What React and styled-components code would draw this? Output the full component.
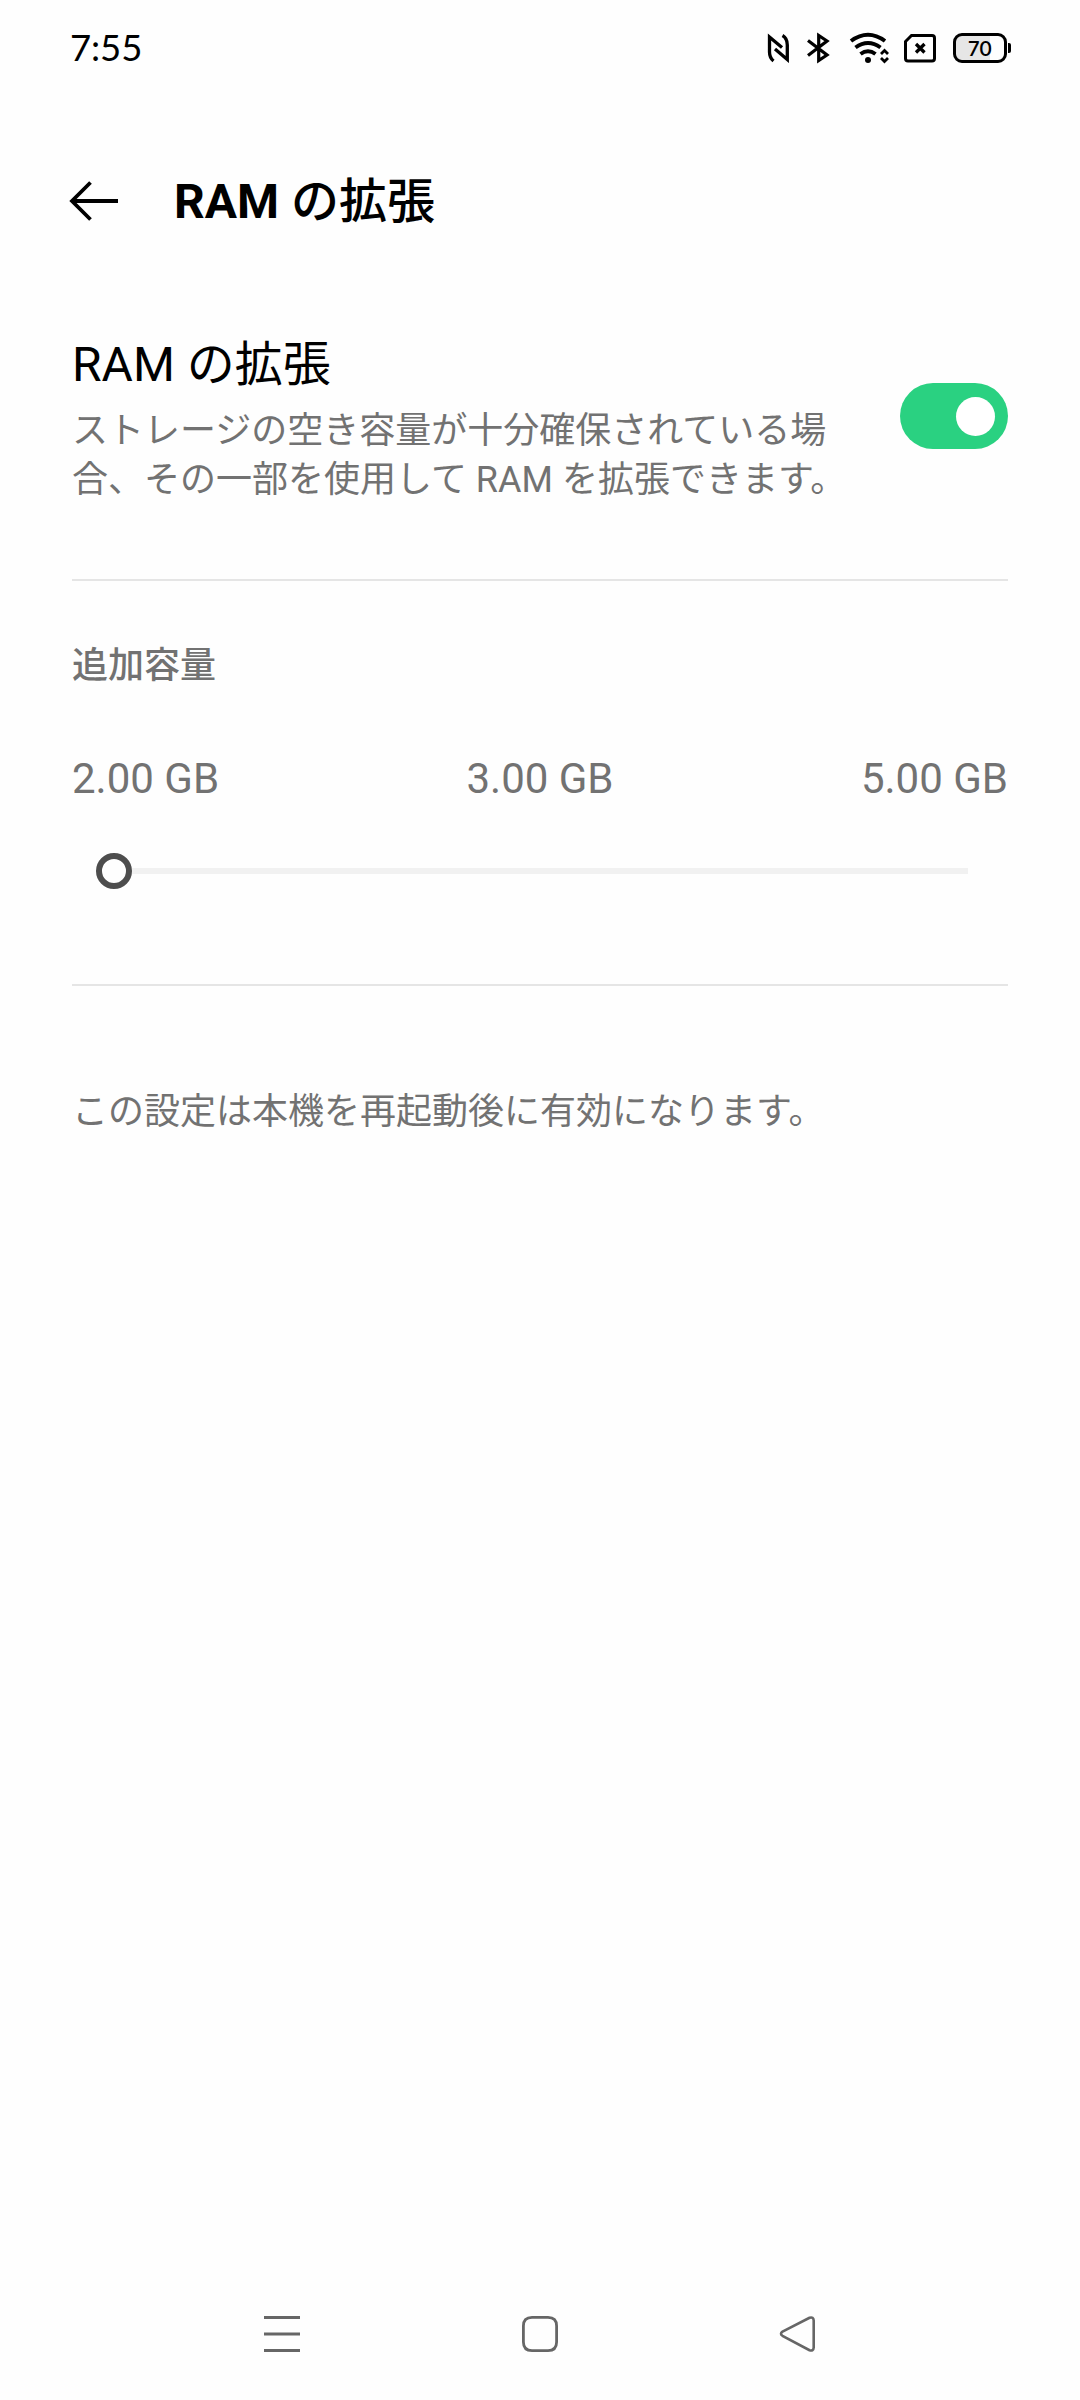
import React from 'react';
import styled, { createGlobalStyle } from 'styled-components';

const GlobalStyle = createGlobalStyle`
  * { box-sizing: border-box; }
  html, body { margin: 0; padding: 0; background: #fefefe; }
  h1, h2, h3, p { margin: 0; font-weight: 400; }
  button { border: 0; padding: 0; background: none; display: block; }
  svg { display: block; }
`;

const Screen = styled.div`
  width: 1080px;
  height: 2400px;
  display: flex;
  flex-direction: column;
  background: #fefefe;
  color: #000;
  font-family: Roboto, "Noto Sans CJK JP", sans-serif;
  overflow: hidden;
`;

const StatusBar = styled.header`
  height: 96px;
  padding: 0 69px 0 70px;
  display: flex;
  justify-content: space-between;
  align-items: center;
`;

const Clock = styled.span`
  padding-bottom: 2px;
  font: 400 36.5px/44px Lato, sans-serif;
  letter-spacing: -0.1px;
`;

const StatusIcons = styled.div`
  display: flex;
  align-items: center;
`;

const Spacer = styled.span`
  width: ${(p) => p.$w}px;
`;

const Battery = styled.div`
  display: flex;
  align-items: center;
  gap: 1px;
  margin-left: 17px;
`;

const BatteryBody = styled.div`
  width: 54px;
  height: 30px;
  border: 3px solid #000;
  border-radius: 9px;
  background: linear-gradient(to right, #e6e6e6 70%, #fefefe 70%);
  font: 500 20.5px/25px Inter, sans-serif;
  letter-spacing: -0.2px;
  text-align: center;
`;

const BatteryTip = styled.div`
  width: 3px;
  height: 10px;
  border-radius: 0 2px 2px 0;
  background: #000;
`;

const TitleBar = styled.div`
  height: 210px;
  padding: 0 68px;
  display: flex;
  align-items: center;
  gap: 54px;
`;

const Title = styled.h1`
  padding-top: 2px;
  font-size: 48px;
  line-height: 64px;
  font-weight: 700;

  span { font-weight: 500; }
`;

const Content = styled.main`
  flex: 1;
  padding: 24px 72px 0;
`;

const SettingRow = styled.section`
  height: 249px;
  display: flex;
  justify-content: space-between;
`;

const SettingText = styled.div`
  width: 780px;
  padding-top: 1px;
`;

const SettingTitle = styled.h2`
  font-size: 48px;
  line-height: 68px;
`;

const Description = styled.p`
  margin-top: 8px;
  font-size: 36px;
  line-height: 49px;
  color: #727272;
`;

const Switch = styled.button`
  width: 108px;
  height: 66px;
  margin-top: 53px;
  padding-right: 13px;
  display: flex;
  align-items: center;
  justify-content: ${(p) => (p.$on ? 'flex-end' : 'flex-start')};
  border-radius: 33px;
  background: ${(p) => (p.$on ? '#2ad181' : '#d9d9d9')};
`;

const Knob = styled.span`
  width: 39px;
  height: 39px;
  border-radius: 50%;
  background: #fff;
`;

const Divider = styled.hr`
  height: 2px;
  margin: 0;
  border: 0;
  background: #e5e5e5;
`;

const Capacity = styled.section`
  height: 403px;
  padding-top: 59px;
`;

const SectionTitle = styled.h3`
  font-size: 36px;
  line-height: 52px;
  font-weight: 500;
  color: #727272;
`;

const Marks = styled.div`
  margin-top: 60px;
  display: flex;
  justify-content: space-between;
  font-size: 42px;
  line-height: 54px;
  color: #727272;
`;

const Slider = styled.div`
  margin: 47px 40px 0 24px;
  height: 36px;
  display: flex;
  align-items: center;
`;

const Thumb = styled.span`
  width: 36px;
  height: 36px;
  border: 6px solid #4d4d4d;
  border-radius: 50%;
`;

const Track = styled.span`
  flex: 1;
  height: 6px;
  background: #f1f1f1;
`;

const Note = styled.p`
  padding-top: 100px;
  font-size: 36px;
  line-height: 52px;
  color: #727272;
`;

const NavBar = styled.nav`
  height: 132px;
  padding: 0 262px;
  display: flex;
  justify-content: space-between;
  align-items: center;
`;

const marks = ['2.00 GB', '3.00 GB', '5.00 GB'];

const NfcIcon = () => (
  <svg width="24" height="30" viewBox="766 33 24 30" fill="none" stroke="#000" strokeWidth="3.300">
    <path d="M773.500 61C770.500 58.500 769.500 56 769.500 52V37L782 47.500" />
    <path d="M782.500 35.500C786 37.500 787.300 41 787.300 45V59.500L775 49" />
  </svg>
);

const BluetoothIcon = () => (
  <svg width="26" height="32" viewBox="806 32 26 32" fill="none" stroke="#000" strokeWidth="3.200">
    <path d="M808 40.500L827 55L818.700 60.500V35.500L827 41L808 55.500" />
  </svg>
);

const WifiIcon = () => (
  <svg width="42" height="34" viewBox="848 31 42 34" fill="none" stroke="#000" strokeWidth="4">
    <path d="M851 41Q868 28.500 885 41" />
    <path d="M855.500 47.500Q868 38.500 880.500 47.500" />
    <path d="M860.500 54Q868 48.500 875.500 54" />
    <circle cx="868" cy="60" r="3" fill="#000" stroke="none" />
    <path d="M881 54L884.500 50.500L888 54M881 58L884.500 61.500L888 58" strokeWidth="2.800" />
  </svg>
);

const NoSimIcon = () => (
  <svg width="32" height="30" viewBox="904 33 32 30" fill="none" stroke="#000" strokeWidth="3">
    <path d="M911.500 35.500H932Q934.500 35.500 934.500 38V58.500Q934.500 61 932 61H908Q905.500 61 905.500 58.500V41.500Z" />
    <path d="M916 44L924.500 52.500M924.500 44L916 52.500" strokeWidth="3.300" />
  </svg>
);

const BackArrow = () => (
  <svg width="52" height="44" viewBox="68 179 52 44" fill="none" stroke="#000" strokeWidth="3.800">
    <path d="M118 201H72M90.500 182.500L72 201L90.500 219.500" />
  </svg>
);

const MenuIcon = () => (
  <svg width="40" height="40" viewBox="0 0 40 40" stroke="#666" strokeWidth="3">
    <path d="M2 3.500H38M2 20H38M2 36.500H38" />
  </svg>
);

const HomeIcon = () => (
  <svg width="40" height="40" viewBox="0 0 40 40" fill="none" stroke="#666" strokeWidth="2.800">
    <path d="M12 3.400H28Q36.600 3.400 36.600 12V28Q36.600 36.600 28 36.600H12Q3.400 36.600 3.400 28V12Q3.400 3.400 12 3.400Z" />
  </svg>
);

const NavBackIcon = () => (
  <svg width="40" height="40" viewBox="0 0 40 40" fill="none" stroke="#666" strokeWidth="2.600">
    <path d="M4.500 17.700L31.500 3.800Q35.500 2.500 35.700 6.500V33.500Q35.500 37.500 31.500 36.200L4.500 21.800Q1.500 19.700 4.500 17.700Z" />
  </svg>
);

export default function App() {
  return (
    <Screen>
      <GlobalStyle />
      <StatusBar>
        <Clock>7:55</Clock>
        <StatusIcons>
          <NfcIcon />
          <Spacer $w={16} />
          <BluetoothIcon />
          <Spacer $w={16} />
          <WifiIcon />
          <Spacer $w={14} />
          <NoSimIcon />
          <Battery>
            <BatteryBody>70</BatteryBody>
            <BatteryTip />
          </Battery>
        </StatusIcons>
      </StatusBar>
      <TitleBar>
        <button aria-label="戻る"><BackArrow /></button>
        <Title>RAM <span>の拡張</span></Title>
      </TitleBar>
      <Content>
        <SettingRow>
          <SettingText>
            <SettingTitle>RAM の拡張</SettingTitle>
            <Description>
              ストレージの空き容量が十分確保されている場合、その一部を使用して RAM を拡張できます。
            </Description>
          </SettingText>
          <Switch $on role="switch" aria-checked="true"><Knob /></Switch>
        </SettingRow>
        <Divider />
        <Capacity>
          <SectionTitle>追加容量</SectionTitle>
          <Marks>{marks.map((m) => <span key={m}>{m}</span>)}</Marks>
          <Slider>
            <Thumb />
            <Track />
          </Slider>
        </Capacity>
        <Divider />
        <Note>この設定は本機を再起動後に有効になります。</Note>
      </Content>
      <NavBar>
        <button aria-label="メニュー"><MenuIcon /></button>
        <button aria-label="ホーム"><HomeIcon /></button>
        <button aria-label="戻る"><NavBackIcon /></button>
      </NavBar>
    </Screen>
  );
}
